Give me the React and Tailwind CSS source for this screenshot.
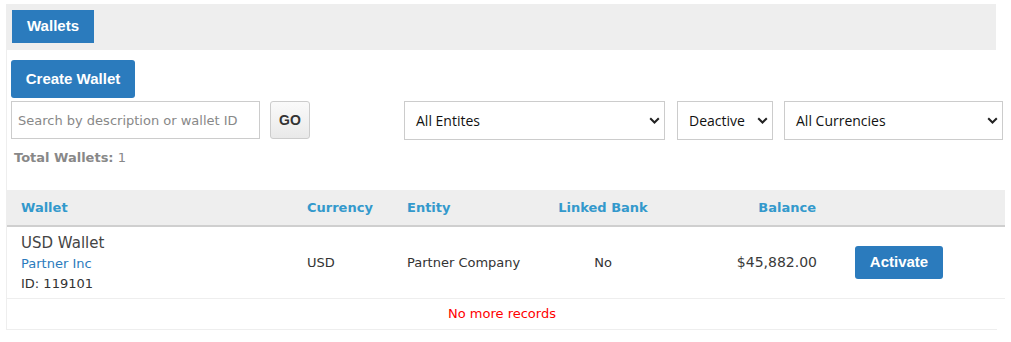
import React from 'react';

const tahoma = { fontFamily: '"DejaVu Sans", Verdana, sans-serif' };

function Chevron() {
  return (
    <svg width="11" height="7" viewBox="0 0 11 7" className="shrink-0">
      <path d="M1.2 1.2 L5.5 5.5 L9.8 1.2" fill="none" stroke="#222" strokeWidth="2" />
    </svg>
  );
}

function SelectBox({ label, className }) {
  return (
    <div
      className={`shrink-0 h-[39px] border border-[#cccccc] bg-white flex items-center justify-between pl-[11px] pr-[4px] text-[14px] text-[#111] font-['Open_Sans',sans-serif] ${className}`}
    >
      <span className="whitespace-nowrap">{label}</span>
      <Chevron />
    </div>
  );
}

export default function App() {
  return (
    <div className="w-[1011px] h-[342px] bg-white pt-[4px] pl-[6px] overflow-hidden" style={tahoma}>
      {/* Tab bar */}
      <div className="w-[990px] h-[46px] bg-[#eeeeee] pl-[6px] pt-[6px]">
        <div className="w-[82px] h-[33px] bg-[#2b7bbd] text-white text-[15px] font-bold flex items-center justify-center font-['Liberation_Sans',Arial,sans-serif]">
          Wallets
        </div>
      </div>

      <div className="w-[990px] border-l border-[#eeeeee]">
        <div className="pt-[10px] pl-[4px]">
          <button className="w-[124px] h-[38px] bg-[#2b7bbd] rounded-[3px] text-white text-[15px] font-bold font-['Liberation_Sans',Arial,sans-serif]">
            Create Wallet
          </button>
        </div>

        {/* Filters */}
        <div className="flex items-start pl-[4px] mt-[3px]">
          <div className="shrink-0 w-[249px] h-[38px] border border-[#cccccc] flex items-center pl-[6px] pt-[2px] text-[13px] text-[#888888]">
            Search by description or wallet ID
          </div>
          <button className="shrink-0 ml-[10px] w-[40px] h-[38px] border border-[#cccccc] rounded-[3px] bg-gradient-to-b from-[#fafafa] to-[#e9e9e9] text-[14px] font-bold text-[#333] font-['Liberation_Sans',Arial,sans-serif]">
            GO
          </button>
          <SelectBox label="All Entites" className="ml-[94px] w-[261px]" />
          <SelectBox label="Deactive" className="ml-[12px] w-[96px]" />
          <SelectBox label="All Currencies" className="ml-[11px] w-[219px]" />
        </div>

        <div className="pl-[7px] mt-[10px] text-[13px] text-[#888888] leading-[16px]">
          <span className="font-bold">Total Wallets:</span> 1
        </div>

        {/* Table */}
        <div className="mt-[24px] w-[998px]">
          <div className="h-[37px] bg-[#eeeeee] border-b-2 border-[#cfcfcf] flex items-center text-[13px] font-bold text-[#3399cc]">
            <div className="w-[286px] pl-[14px]">Wallet</div>
            <div className="w-[100px] pl-[14px]">Currency</div>
            <div className="w-[150px] pl-[14px]">Entity</div>
            <div className="w-[120px] text-center">Linked Bank</div>
            <div className="w-[168px] text-right pr-[15px]">Balance</div>
            <div className="flex-1" />
          </div>
          <div className="h-[72px] border-b border-[#eeeeee] flex items-center text-[13px] text-[#333333]">
            <div className="w-[286px] pl-[14px] flex flex-col">
              <span className="text-[15px] leading-[22px] text-[#444]">USD Wallet</span>
              <span className="leading-[20px] text-[#2b7bbd]">Partner Inc</span>
              <span className="leading-[20px]">ID: 119101</span>
            </div>
            <div className="w-[100px] pl-[14px]">USD</div>
            <div className="w-[150px] pl-[14px]">Partner Company</div>
            <div className="w-[120px] text-center">No</div>
            <div className="w-[168px] text-right pr-[14px] text-[14px] text-[#3a3a3a]">$45,882.00</div>
            <div className="flex-1 pl-[24px]">
              <button className="w-[88px] h-[33px] bg-[#2b7bbd] rounded-[3px] text-white text-[15px] font-bold font-['Liberation_Sans',Arial,sans-serif]">
                Activate
              </button>
            </div>
          </div>
          <div className="w-[990px] h-[31px] border-b border-[#eeeeee] flex items-center justify-center text-[13px] text-[#ff0000]">
            No more records
          </div>
        </div>
      </div>
    </div>
  );
}
